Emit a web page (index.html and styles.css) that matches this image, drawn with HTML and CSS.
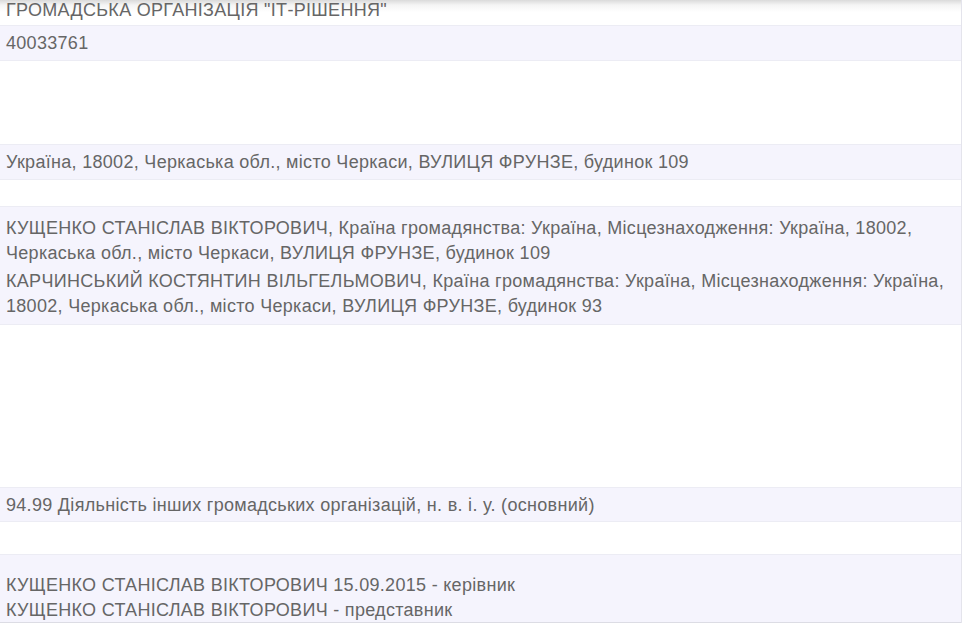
FILE: index.html
```html
<!DOCTYPE html>
<html lang="uk">
<head>
<meta charset="utf-8">
<title>ГО ІТ-Рішення</title>
<link rel="stylesheet" href="styles.css">
</head>
<body>
<div class="table">
  <div class="row r1 first"><div class="cell">ГРОМАДСЬКА ОРГАНІЗАЦІЯ "ІТ-РІШЕННЯ"</div></div>
  <div class="row r2 alt"><div class="cell">40033761</div></div>
  <div class="row r3"></div>
  <div class="row r4 alt"><div class="cell">Україна, 18002, Черкаська обл., місто Черкаси, ВУЛИЦЯ ФРУНЗЕ, будинок 109</div></div>
  <div class="row r5"></div>
  <div class="row r6 alt top">
    <div class="cell stack">
      <div class="item">КУЩЕНКО СТАНІСЛАВ ВІКТОРОВИЧ, Країна громадянства: Україна, Місцезнаходження: Україна, 18002, Черкаська обл., місто Черкаси, ВУЛИЦЯ ФРУНЗЕ, будинок 109</div>
      <div class="item">КАРЧИНСЬКИЙ КОСТЯНТИН ВІЛЬГЕЛЬМОВИЧ, Країна громадянства: Україна, Місцезнаходження: Україна, 18002, Черкаська обл., місто Черкаси, ВУЛИЦЯ ФРУНЗЕ, будинок 93</div>
    </div>
  </div>
  <div class="row r7"></div>
  <div class="row r8 alt"><div class="cell">94.99 Діяльність інших громадських організацій, н. в. і. у. (основний)</div></div>
  <div class="row r9"></div>
  <div class="row r10 alt top">
    <div class="cell lines">КУЩЕНКО СТАНІСЛАВ ВІКТОРОВИЧ 15.09.2015 - керівник<br>КУЩЕНКО СТАНІСЛАВ ВІКТОРОВИЧ - представник</div>
  </div>
</div>
</body>
</html>
```
FILE: styles.css
```css
html, body {
  margin: 0;
  padding: 0;
  background: #ffffff;
}

body {
  font-family: "Liberation Sans", Arial, Helvetica, sans-serif;
  font-size: 18px;
  letter-spacing: 0.3px;
  color: #666666;
}

.table {
  width: 961px;
  border-right: 1px solid #e4e4ec;
  display: flex;
  flex-direction: column;
}

.row {
  box-sizing: border-box;
  display: flex;
  align-items: center;
  border-bottom: 1px solid #ececf4;
  background: #ffffff;
  padding: 0 6px;
}

.row.alt {
  background: #f5f4fd;
}

.row.top {
  align-items: flex-start;
}

.row.first {
  background: linear-gradient(to bottom, #dadada 0px, #f4f4f4 5px, #ffffff 12px);
}

.cell {
  line-height: 20px;
}

.r1 { height: 26px; align-items: flex-start; padding-top: 0; }
.r2 { height: 35px; }
.r3 { height: 84px; }
.r4 { height: 35px; }
.r5 { height: 27px; }
.r6 { height: 118px; padding-top: 9px; }
.r7 { height: 163px; }
.r8 { height: 34px; }
.r9 { height: 33px; }
.r10 { height: 68px; padding-top: 18px; border-bottom-color: #dcdce4; }

.stack {
  display: flex;
  flex-direction: column;
  gap: 3px;
  line-height: 25px;
}

.lines {
  line-height: 25px;
}
```
